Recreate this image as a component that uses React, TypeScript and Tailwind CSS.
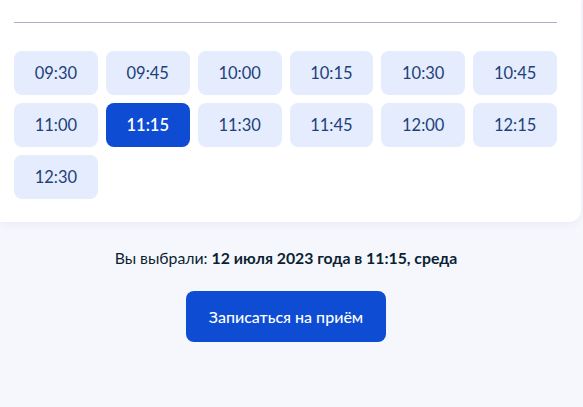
import React from 'react';

const SLOTS = [
  '09:30', '09:45', '10:00', '10:15', '10:30', '10:45',
  '11:00', '11:15', '11:30', '11:45', '12:00', '12:15',
  '12:30',
];

const SELECTED = '11:15';

function Slot({ time, active }: { time: string; active: boolean }) {
  return (
    <button
      className={`h-[44px] rounded-lg text-[16.5px] leading-none ${
        active ? 'bg-[#0d4cd3] text-white font-semibold' : 'bg-[#e4ecfd] text-[#233f7a]'
      }`}
    >
      {time}
    </button>
  );
}

export default function App() {
  return (
    <div
      className="min-h-[407px] w-[583px] bg-[#f5f7fc] overflow-hidden"
      style={{ fontFamily: 'Lato, "Noto Sans", sans-serif' }}
    >
      {/* Карточка со слотами времени */}
      <div className="w-[581px] bg-white rounded-br-xl shadow-[0_2px_8px_rgba(30,50,110,0.06)] pl-[14px] pr-[24px] pt-[22px] pb-[23px]">
        <div className="h-px bg-[#a9b2c2]" />
        <div className="grid grid-cols-6 gap-x-[8px] gap-y-[8px] mt-[28px]">
          {SLOTS.map(t => (
            <Slot key={t} time={t} active={t === SELECTED} />
          ))}
        </div>
      </div>

      {/* Итог + кнопка */}
      <div className="w-[572px] flex flex-col items-center">
        <p className="mt-[26px] text-[15.8px] leading-[20px] text-[#0b1f33]">
          Вы выбрали: <span className="font-bold">12 июля 2023 года в 11:15, среда</span>
        </p>
        <button className="mt-[23px] w-[200px] h-[51px] rounded-lg bg-[#0d4cd3] text-white text-[16px] font-medium">
          Записаться на приём
        </button>
      </div>
    </div>
  );
}
